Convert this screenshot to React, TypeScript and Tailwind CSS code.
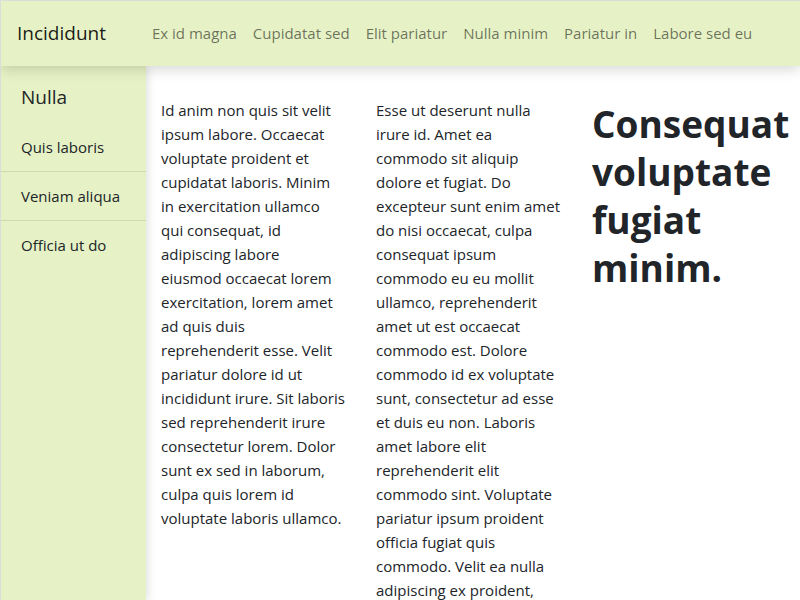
import React from "react";

const navLinks = [
  "Ex id magna",
  "Cupidatat sed",
  "Elit pariatur",
  "Nulla minim",
  "Pariatur in",
  "Labore sed eu",
];

const sideLinks = ["Quis laboris", "Veniam aliqua", "Officia ut do"];

const colTwo =
  "Esse ut deserunt nulla irure id. Amet ea commodo sit aliquip dolore et fugiat. Do excepteur sunt enim amet do nisi occaecat, culpa consequat ipsum commodo eu eu mollit ullamco, reprehenderit amet ut est occaecat commodo est. Dolore commodo id ex voluptate sunt, consectetur ad esse et duis eu non. Laboris amet labore elit reprehenderit elit commodo sint. Voluptate pariatur ipsum proident officia fugiat quis commodo. Velit ea nulla adipiscing ex proident, culpa in ad.";

export default function App() {
  return (
    <div
      className="h-[600px] w-[800px] overflow-hidden border-l border-t border-[#dcdcdc] bg-white text-[#212529]"
      style={{ fontFamily: '"Open Sans", "Noto Sans", sans-serif' }}
    >
      <nav className="relative z-20 flex h-[65px] items-center bg-[#e6f2c5] pl-4 shadow-[0_4px_12px_rgba(0,0,0,0.15)]">
        <span className="mr-[38px] text-[19px] text-black/90">Incididunt</span>
        <div className="flex items-center">
          {navLinks.map((label) => (
            <a key={label} className="px-2 text-[15px] text-black/55">
              {label}
            </a>
          ))}
        </div>
      </nav>

      <div className="flex h-[535px]">
        <aside className="relative z-10 w-[145px] shrink-0 bg-[#e6f2c5] shadow-[2px_0_8px_rgba(0,0,0,0.12)]">
          <div className="px-5 pt-[18px] pb-[13px] text-[19px] leading-[26px]">Nulla</div>
          {sideLinks.map((label, i) => (
            <div
              key={label}
              className={`flex h-[49px] items-center px-5 text-[15px] ${
                i < sideLinks.length - 1 ? "border-b border-black/10" : ""
              }`}
            >
              {label}
            </div>
          ))}
        </aside>

        <main className="flex flex-1 items-start pl-[15px] pt-[32px] text-[15px] leading-6">
          <p className="mr-[30px] w-[185px] shrink-0">
            Id anim non quis sit velit ipsum labore. Occaecat voluptate proident et cupidatat
            laboris. Minim in exercitation ullamco
            <br />
            qui consequat, id adipiscing labore
            <br />
            eiusmod occaecat lorem exercitation, lorem amet ad quis duis reprehenderit esse. Velit
            pariatur dolore id ut incididunt irure. Sit laboris sed reprehenderit irure consectetur
            lorem. Dolor sunt ex sed in laborum, culpa quis lorem id voluptate laboris ullamco.
          </p>
          <p className="mr-[31px] w-[185px] shrink-0">{colTwo}</p>
          <h1 className="mt-[2px] flex-1 text-[37px] font-bold leading-[48px]">
            Consequat voluptate fugiat minim.
          </h1>
        </main>
      </div>
    </div>
  );
}
